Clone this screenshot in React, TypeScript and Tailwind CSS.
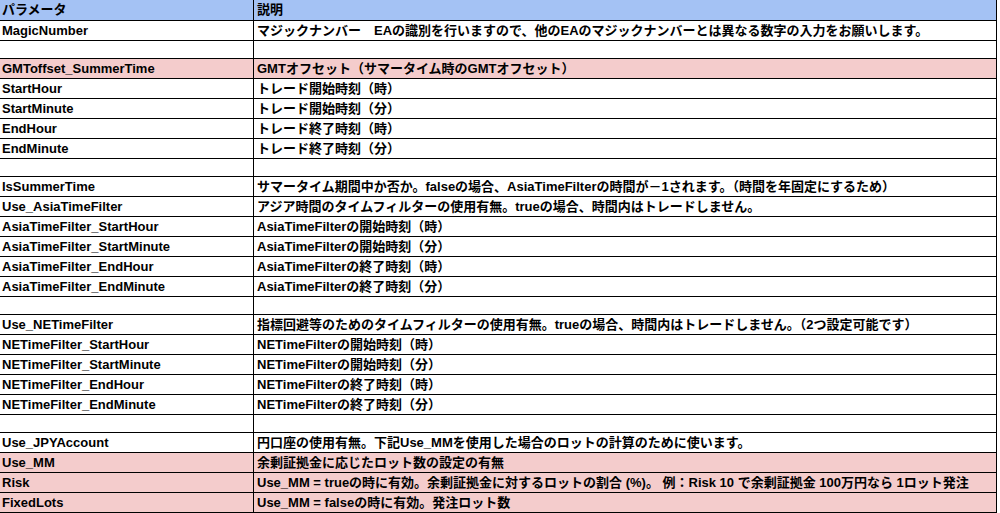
import React from "react";

type R = { p?: string; d?: string; pink?: boolean; blank?: boolean };
const rows: R[] = [
  { p: "MagicNumber", d: "マジックナンバー　EAの識別を行いますので、他のEAのマジックナンバーとは異なる数字の入力をお願いします。" },
  { blank: true },
  { p: "GMToffset_SummerTime", d: "GMTオフセット（サマータイム時のGMTオフセット）", pink: true },
  { p: "StartHour", d: "トレード開始時刻（時）" },
  { p: "StartMinute", d: "トレード開始時刻（分）" },
  { p: "EndHour", d: "トレード終了時刻（時）" },
  { p: "EndMinute", d: "トレード終了時刻（分）" },
  { blank: true },
  { p: "IsSummerTime", d: "サマータイム期間中か否か。falseの場合、AsiaTimeFilterの時間が－1されます。（時間を年固定にするため）" },
  { p: "Use_AsiaTimeFilter", d: "アジア時間のタイムフィルターの使用有無。trueの場合、時間内はトレードしません。" },
  { p: "AsiaTimeFilter_StartHour", d: "AsiaTimeFilterの開始時刻（時）" },
  { p: "AsiaTimeFilter_StartMinute", d: "AsiaTimeFilterの開始時刻（分）" },
  { p: "AsiaTimeFilter_EndHour", d: "AsiaTimeFilterの終了時刻（時）" },
  { p: "AsiaTimeFilter_EndMinute", d: "AsiaTimeFilterの終了時刻（分）" },
  { blank: true },
  { p: "Use_NETimeFilter", d: "指標回避等のためのタイムフィルターの使用有無。trueの場合、時間内はトレードしません。（2つ設定可能です）" },
  { p: "NETimeFilter_StartHour", d: "NETimeFilterの開始時刻（時）" },
  { p: "NETimeFilter_StartMinute", d: "NETimeFilterの開始時刻（分）" },
  { p: "NETimeFilter_EndHour", d: "NETimeFilterの終了時刻（時）" },
  { p: "NETimeFilter_EndMinute", d: "NETimeFilterの終了時刻（分）" },
  { blank: true },
  { p: "Use_JPYAccount", d: "円口座の使用有無。下記Use_MMを使用した場合のロットの計算のために使います。" },
  { p: "Use_MM", d: "余剰証拠金に応じたロット数の設定の有無", pink: true },
  { p: "Risk", d: "Use_MM = trueの時に有効。余剰証拠金に対するロットの割合 (%)。 例：Risk 10 で余剰証拠金 100万円なら 1ロット発注", pink: true },
  { p: "FixedLots", d: "Use_MM = falseの時に有効。発注ロット数", pink: true },
];

export default function App() {
  return (
    <div
      className="w-[1000px] h-[513px] overflow-hidden bg-white text-[13px] leading-[16px] font-bold text-black"
      style={{ fontFamily: '"Liberation Sans", Arial, "Noto Sans CJK JP", sans-serif' }}
    >
      <div className="w-[997px] border-r border-black">
        <div className="flex h-[21px] bg-[#a4c2f4] border-b border-black">
          <div className="w-[254px] pl-[2px] pt-[2px] border-r border-black">パラメータ</div>
          <div className="flex-1 pl-[3px] pt-[2px]">説明</div>
        </div>
        {rows.map((r, i) => (
          <div
            key={i}
            className={`flex border-b border-black ${r.blank ? "h-[18px]" : "h-[20px]"} ${r.pink ? "bg-[#f4cccc]" : "bg-white"}`}
          >
            <div className="w-[254px] shrink-0 pl-[2px] pt-[2px] border-r border-black whitespace-nowrap">{r.p}</div>
            <div className="flex-1 pl-[3px] pt-[2px] whitespace-nowrap overflow-hidden">{r.d}</div>
          </div>
        ))}
      </div>
    </div>
  );
}
